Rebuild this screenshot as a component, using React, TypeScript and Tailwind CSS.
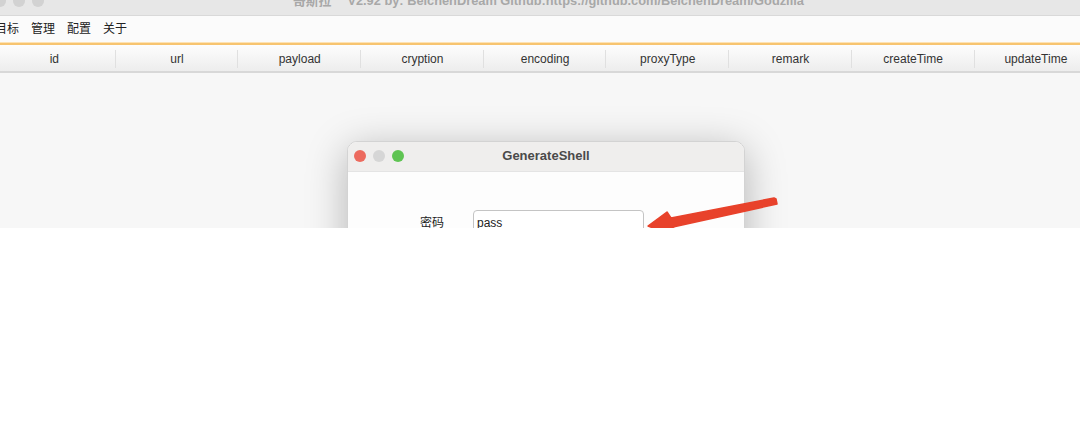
import React from 'react';

const columns = ['id', 'url', 'payload', 'cryption', 'encoding', 'proxyType', 'remark', 'createTime', 'updateTime'];
const menus = ['目标', '管理', '配置', '关于'];

const font = { fontFamily: '"Liberation Sans", "Noto Sans CJK SC", sans-serif' };

function Arrow() {
  return (
    <svg className="absolute left-[640px] top-[192px] pointer-events-none" width="145" height="50" viewBox="0 0 145 50">
      <polygon
        points="134,6 136,7 137,12 33,35 41,47 8,34 27,20 31,26"
        fill="#e8422b"
        stroke="#e8422b"
        strokeWidth="1.5"
        strokeLinejoin="round"
      />
    </svg>
  );
}

export default function App() {
  return (
    <div className="w-[1080px] h-[437px] bg-white overflow-hidden" style={font}>
      <div className="relative h-[228px] overflow-hidden bg-[#f7f7f7]">
        {/* title bar, cut off at the top */}
        <div className="relative h-[16px] bg-[#e7e7e7] border-b border-[#d9d9d9] overflow-hidden">
          <div className="flex gap-[7px] -ml-[6px] -mt-[5px]">
            <span className="w-[12px] h-[12px] rounded-full bg-[#d2d2d2]" />
            <span className="w-[12px] h-[12px] rounded-full bg-[#d2d2d2]" />
            <span className="w-[12px] h-[12px] rounded-full bg-[#d2d2d2]" />
          </div>
          <div className="absolute left-[293px] top-[-9px] flex gap-[16px] text-[12.8px] font-bold text-[#a8a8a8] whitespace-nowrap">
            <span>哥斯拉</span>
            <span>V2.92 by: BeichenDream Github:https://github.com/BeichenDream/Godzilla</span>
          </div>
        </div>

        {/* menu bar */}
        <div className="h-[26px] bg-[#fbfbfb] flex items-center gap-3 -ml-[5px] text-[12px] text-[#222]">
          {menus.map((m) => (
            <span key={m}>{m}</span>
          ))}
        </div>
        <div className="h-[1px] bg-[#fde3b5]" />
        <div className="h-[2px] bg-[#f7c470]" />

        {/* table header */}
        <div className="flex h-[28px] -ml-[7px] bg-gradient-to-b from-[#fdfdfd] to-[#ededed] border-b-2 border-[#d8d8d8]">
          {columns.map((c, i) => (
            <div key={c} className="w-[122.7px] shrink-0 flex items-center relative pt-[2px]">
              <span className="flex-1 text-center text-[12px] text-[#333]">{c}</span>
              {i < columns.length - 1 && <span className="absolute right-0 top-[5px] h-[18px] w-px bg-[#e0e0e0]" />}
            </div>
          ))}
        </div>

        {/* dialog window */}
        <div className="absolute left-[347px] top-[141px] w-[398px] h-[140px] rounded-[10px] border border-[#d3d3d3] bg-[#fdfdfd] shadow-[0_8px_40px_rgba(0,0,0,0.28)] overflow-hidden">
          <div className="relative h-[30px] bg-[#efeeed] border-b border-[#e4e4e4] flex items-center justify-center">
            <div className="absolute left-[6px] top-[8px] flex gap-[7px]">
              <span className="w-[12px] h-[12px] rounded-full bg-[#ec6a5e]" />
              <span className="w-[12px] h-[12px] rounded-full bg-[#d6d6d6]" />
              <span className="w-[12px] h-[12px] rounded-full bg-[#5fc453]" />
            </div>
            <span className="text-[13px] font-bold text-[#4a4a4a] -mt-[2px]">GenerateShell</span>
          </div>
          <div className="flex items-start pt-[38px]">
            <span className="w-[96px] text-right text-[12px] text-[#222] pt-[4px]">密码</span>
            <div className="ml-[29px] w-[171px] h-[26px] border border-[#c4c4c4] rounded-[4px] bg-white px-[3px] pt-[3px] text-[12px] text-[#222]">
              pass
            </div>
          </div>
        </div>

        <Arrow />
      </div>
    </div>
  );
}
